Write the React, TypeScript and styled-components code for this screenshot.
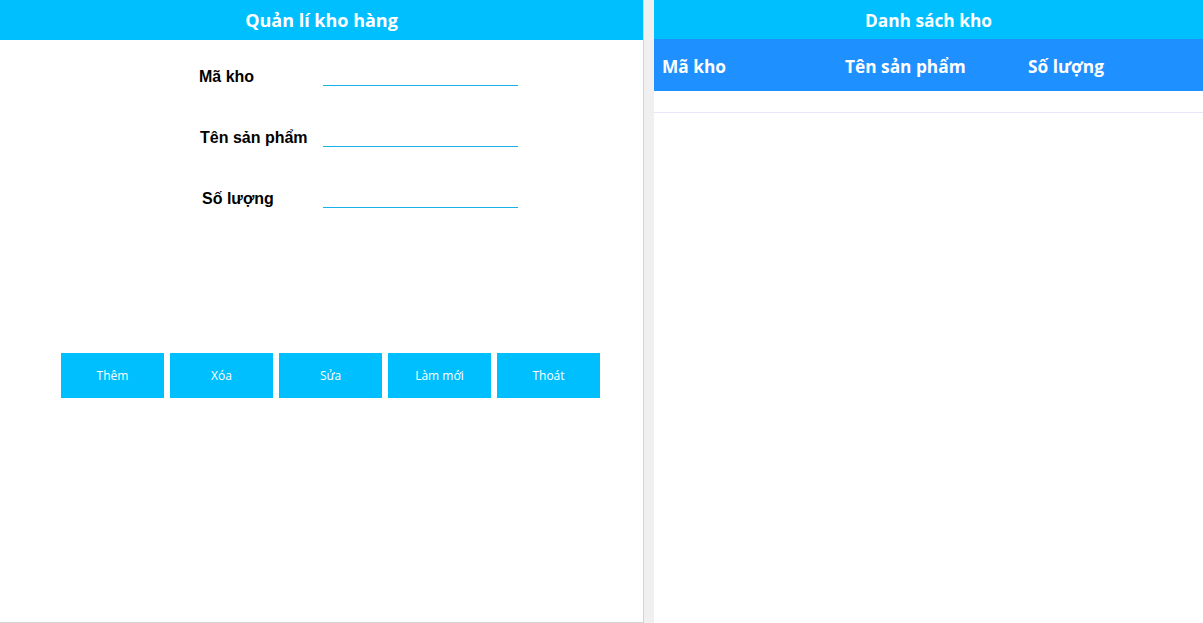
import React from "react";
import styled, { createGlobalStyle } from "styled-components";

const GlobalStyle = createGlobalStyle`
  html, body {
    margin: 0;
    padding: 0;
    background: #f0f0f0;
  }
  * {
    box-sizing: border-box;
  }
`;

const Page = styled.div`
  display: flex;
  gap: 10px;
  height: 623px;
  overflow: hidden;
`;

const LeftPanel = styled.section`
  width: 644px;
  height: 623px;
  background: #fff;
  border-right: 1px solid #d4d4d4;
  border-bottom: 1px solid #d4d4d4;
  display: flex;
  flex-direction: column;
`;

const RightPanel = styled.section`
  flex: 1;
  background: #fff;
  display: flex;
  flex-direction: column;
`;

const Title = styled.h1<{ $h: number; $size: number; $pt?: number }>`
  margin: 0;
  flex-shrink: 0;
  height: ${(p) => p.$h}px;
  padding-top: ${(p) => p.$pt ?? 0}px;
  background: #00bfff;
  color: #fff;
  font-family: "Open Sans", "Noto Sans", sans-serif;
  font-weight: 700;
  font-size: ${(p) => p.$size}px;
  display: flex;
  align-items: center;
  justify-content: center;
`;

const Form = styled.div`
  display: grid;
  grid-template-columns: 124px 195px;
  grid-auto-rows: 26px;
  row-gap: 35px;
  padding: 24px 0 0 199px;
`;

const Label = styled.label<{ $off?: number }>`
  font-family: "Liberation Sans", Arial, sans-serif;
  font-weight: 700;
  font-size: 16px;
  color: #000;
  height: 26px;
  line-height: 26px;
  padding-left: ${(p) => p.$off ?? 0}px;
`;

const Input = styled.input`
  align-self: start;
  border: none;
  border-bottom: 1px solid #1ab0e8;
  outline: none;
  height: 22px;
  padding: 0;
  margin: 0;
  background: transparent;
  font-family: "Liberation Sans", Arial, sans-serif;
  font-size: 14px;
`;

const Buttons = styled.div`
  display: flex;
  gap: 6px;
  padding: 141px 0 0 61px;
`;

const Btn = styled.button`
  width: 103px;
  height: 45px;
  border: none;
  background: #00bfff;
  color: #fff;
  font-family: "Open Sans", "Noto Sans", sans-serif;
  font-size: 12px;
  cursor: pointer;
  padding: 0;
`;

const Table = styled.table`
  width: 100%;
  border-collapse: collapse;
  table-layout: fixed;
`;

const Th = styled.th`
  height: 52px;
  background: #1e90ff;
  color: #fff;
  text-align: left;
  padding: 2px 8px 0;
  font-family: "Open Sans", "Noto Sans", sans-serif;
  font-weight: 700;
  font-size: 17.3px;
`;

const Td = styled.td`
  height: 21px;
  padding: 0;
  border-bottom: 1px solid #e6e6fa;
`;

const fields = [
  { label: "Mã kho", off: 0 },
  { label: "Tên sản phẩm", off: 1 },
  { label: "Số lượng", off: 3 },
];

const actions = ["Thêm", "Xóa", "Sửa", "Làm mới", "Thoát"];

export default function App() {
  return (
    <>
      <GlobalStyle />
      <Page>
        <LeftPanel>
          <Title $h={40} $size={18}>
            Quản lí kho hàng
          </Title>
          <Form>
            {fields.map((f) => (
              <React.Fragment key={f.label}>
                <Label $off={f.off}>{f.label}</Label>
                <Input type="text" />
              </React.Fragment>
            ))}
          </Form>
          <Buttons>
            {actions.map((a) => (
              <Btn key={a}>{a}</Btn>
            ))}
          </Buttons>
        </LeftPanel>
        <RightPanel>
          <Title $h={39} $size={17.3} $pt={2}>
            Danh sách kho
          </Title>
          <Table>
            <thead>
              <tr>
                <Th>Mã kho</Th>
                <Th>Tên sản phẩm</Th>
                <Th>Số lượng</Th>
              </tr>
            </thead>
            <tbody>
              <tr>
                <Td colSpan={3} />
              </tr>
            </tbody>
          </Table>
        </RightPanel>
      </Page>
    </>
  );
}
